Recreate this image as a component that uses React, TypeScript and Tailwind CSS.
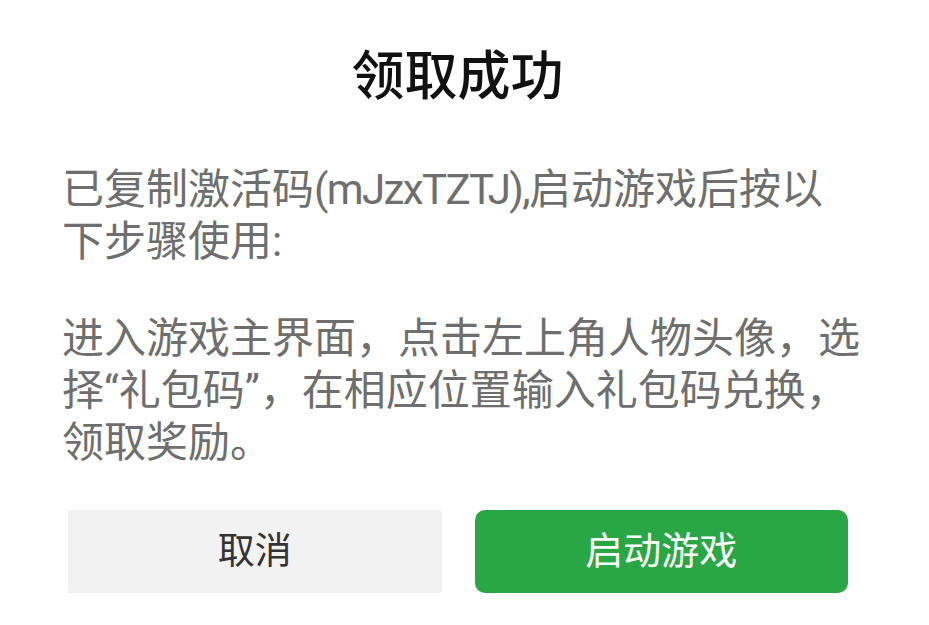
export default function App() {
  return (
    <div
      className="w-[929px] h-[625px] bg-white flex flex-col overflow-hidden"
      style={{ fontFamily: 'Roboto, "Noto Sans CJK SC", "Noto Sans", sans-serif' }}
    >
      <h1 className="text-center text-[53px] leading-[52px] pt-[51px] pr-[14px] text-[#111] font-medium">
        领取成功
      </h1>
      <div className="mt-[61px] pl-[62px] pr-[62px] text-[42px] leading-[52px] text-[#6e6e6e]">
        <p>
          已复制激活码<span className="tracking-[-1.6px]">(mJzxTZTJ),</span>启动游戏后按以
          <br />
          下步骤使用:
        </p>
        <p className="mt-[45px]">
          进入游戏主界面，点击左上角人物头像，选择“礼包码”，在相应位置输入礼包码兑换，领取奖励。
        </p>
      </div>
      <div className="flex gap-[33px] pl-[68px] pr-[81px] mt-[41px]">
        <button className="flex-1 h-[83px] bg-[#f2f2f2] rounded-[2px] text-[37px] text-[#333] flex items-center justify-center">
          取消
        </button>
        <button className="flex-1 h-[83px] bg-[#2aa745] rounded-[10px] text-[38px] text-white flex items-center justify-center">
          启动游戏
        </button>
      </div>
    </div>
  );
}
